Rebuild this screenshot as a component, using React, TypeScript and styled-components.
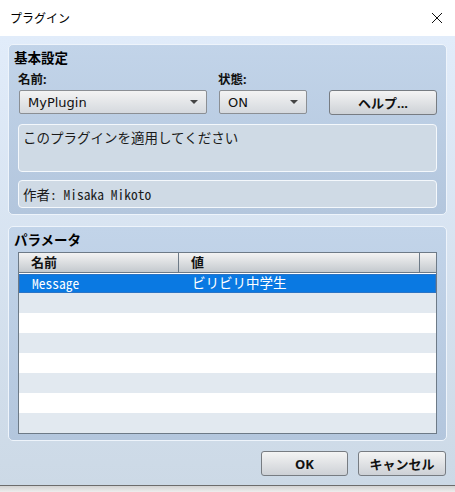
import React from "react";
import styled, { createGlobalStyle } from "styled-components";

const Global = createGlobalStyle`
  html, body { margin: 0; padding: 0; background: #f0f0f0; overflow: hidden; }
  * { box-sizing: border-box; }
`;

const UI = `"DejaVu Sans", "Noto Sans CJK JP", sans-serif`;
const CJK = `"Noto Sans", "Noto Sans CJK JP", sans-serif`;
const MONO = `"Noto Sans Mono CJK JP", "DejaVu Sans Mono", monospace`;

const Window = styled.div`
  width: 455px;
  height: 492px;
  display: flex;
  flex-direction: column;
  font-family: ${CJK};
`;

const TitleBar = styled.div`
  height: 36px;
  flex: none;
  background: #ffffff;
  display: flex;
  align-items: center;
  justify-content: space-between;
  padding: 0 12px 0 10px;
  font-size: 12px;
  color: #000;
`;

const Body = styled.div`
  height: 449px;
  flex: none;
  background: linear-gradient(#e1ecfa, #ccd9e6);
  padding: 8px 8px 0 8px;
  display: flex;
  flex-direction: column;
`;

const Shadow = styled.div`
  flex: 1;
  border-top: 1px solid #6c6c6c;
  background: linear-gradient(#d2d2d2, #ededed);
`;

const Group = styled.div<{ $h: number }>`
  height: ${(p) => p.$h}px;
  flex: none;
  border: 1px solid #eef4fb;
  border-radius: 5px;
  background: linear-gradient(#c2d4e9, #b3c6dd);
  padding: 2px 9px 0 9px;
  display: flex;
  flex-direction: column;
`;

const GroupTitle = styled.div`
  font-size: 13.5px;
  font-weight: bold;
  color: #000;
  height: 22px;
  line-height: 22px;
  margin-left: -4px;
`;

const LabelRow = styled.div`
  display: flex;
  height: 16px;
  margin-top: 3px;
  font-size: 12.5px;
  font-weight: bold;
  line-height: 16px;
  color: #111;
`;

const Label = styled.div<{ $w: number }>`
  width: ${(p) => p.$w}px;
  flex: none;
`;

const ControlRow = styled.div`
  display: flex;
  align-items: center;
  height: 24px;
  margin-top: 2px;
  padding-left: 1px;
`;

const Combo = styled.div<{ $w: number }>`
  width: ${(p) => p.$w}px;
  height: 24px;
  flex: none;
  border: 1px solid #8b8f94;
  border-radius: 2px;
  background: linear-gradient(#f3f3f3, #d5d9de);
  display: flex;
  align-items: center;
  justify-content: space-between;
  padding: 0 8px 0 8px;
  font-family: ${UI};
  font-size: 13px;
  color: #111;
`;

const Arrow = styled.span`
  width: 0;
  height: 0;
  border-left: 4px solid transparent;
  border-right: 4px solid transparent;
  border-top: 4px solid #444;
`;

const Button = styled.div<{ $w: number }>`
  width: ${(p) => p.$w}px;
  height: 25px;
  flex: none;
  border: 1px solid #777c82;
  border-radius: 3px;
  background: linear-gradient(#f4f4f4, #cdd1d6);
  display: flex;
  align-items: center;
  justify-content: center;
  font-size: 13px;
  font-weight: bold;
  color: #111;
`;

const InfoBox = styled.div<{ $h: number }>`
  height: ${(p) => p.$h}px;
  flex: none;
  border: 1px solid #f4f8fc;
  border-radius: 4px;
  background: #cfdae5;
  padding: 3px 4px 0 4px;
  font-size: 13.5px;
  line-height: 20px;
  color: #1a1a1a;
`;

const MonoText = styled.span`
  font-family: ${MONO};
  font-size: 13.5px;
`;

const Table = styled.div`
  margin-top: 1px;
  height: 182px;
  border: 1px solid #6d7a87;
  background: #ffffff;
  display: flex;
  flex-direction: column;
`;

const HeaderRow = styled.div`
  display: flex;
  height: 20px;
  flex: none;
  background: linear-gradient(#f3f3f3, #c4c9ce);
  border-bottom: 1px solid #6d7a87;
`;

const HeadCell = styled.div<{ $w?: number }>`
  ${(p) => (p.$w ? `width: ${p.$w}px; flex: none;` : "flex: 1;")}
  border-right: 1px solid #6d7a87;
  padding-left: 12px;
  font-size: 13px;
  font-weight: bold;
  line-height: 19px;
  color: #111;
  &:last-child { border-right: none; }
`;

const Row = styled.div<{ $kind: "sel" | "light" | "white" }>`
  display: flex;
  height: 20px;
  flex: none;
  align-items: center;
  font-size: 13px;
  background: ${(p) =>
    p.$kind === "sel" ? "#0a79e2" : p.$kind === "light" ? "#e2e9f0" : "#ffffff"};
  color: ${(p) => (p.$kind === "sel" ? "#ffffff" : "#111")};
  border: ${(p) => (p.$kind === "sel" ? "1px solid #2a74c6" : "none")};
  ${(p) => (p.$kind === "sel" ? "margin: 1px 0 0 0; height: 19px;" : "")}
`;

const Cell = styled.div<{ $w: number; $mono?: boolean }>`
  width: ${(p) => p.$w}px;
  flex: none;
  padding-left: 12px;
  line-height: 17px;
  font-family: ${(p) => (p.$mono ? MONO : CJK)};
  font-size: 13.5px;
`;

const Footer = styled.div`
  display: flex;
  justify-content: flex-end;
  gap: 10px;
  margin-top: 10px;
  padding-right: 1px;
`;

const rows: ("light" | "white")[] = ["light", "white", "light", "white", "light", "white", "light"];

export default function App() {
  return (
    <>
      <Global />
      <Window>
        <TitleBar>
          <span>プラグイン</span>
          <svg width="12" height="12" viewBox="0 0 12 12">
            <path d="M1 1 L11 11 M11 1 L1 11" stroke="#111" strokeWidth="1" fill="none" />
          </svg>
        </TitleBar>
        <Body>
          <Group $h={171}>
            <GroupTitle>基本設定</GroupTitle>
            <LabelRow>
              <Label $w={200}>名前:</Label>
              <Label $w={100}>状態:</Label>
            </LabelRow>
            <ControlRow>
              <Combo $w={188}>
                <span>MyPlugin</span>
                <Arrow />
              </Combo>
              <div style={{ width: 12 }} />
              <Combo $w={88}>
                <span>ON</span>
                <Arrow />
              </Combo>
              <div style={{ width: 22 }} />
              <Button $w={108}>ヘルプ...</Button>
            </ControlRow>
            <div style={{ height: 10 }} />
            <InfoBox $h={48}>このプラグインを適用してください</InfoBox>
            <div style={{ height: 8 }} />
            <InfoBox $h={28}>
              <MonoText>作者: Misaka Mikoto</MonoText>
            </InfoBox>
          </Group>
          <div style={{ height: 11 }} />
          <Group $h={215}>
            <GroupTitle>パラメータ</GroupTitle>
            <Table>
              <HeaderRow>
                <HeadCell $w={160}>名前</HeadCell>
                <HeadCell>値</HeadCell>
                <HeadCell $w={16} />
              </HeaderRow>
              <Row $kind="sel">
                <Cell $w={160} $mono>Message</Cell>
                <Cell $w={240}>ビリビリ中学生</Cell>
              </Row>
              {rows.map((k, i) => (
                <Row key={i} $kind={k} />
              ))}
            </Table>
          </Group>
          <Footer>
            <Button $w={87}>OK</Button>
            <Button $w={88}>キャンセル</Button>
          </Footer>
        </Body>
        <Shadow />
      </Window>
    </>
  );
}
